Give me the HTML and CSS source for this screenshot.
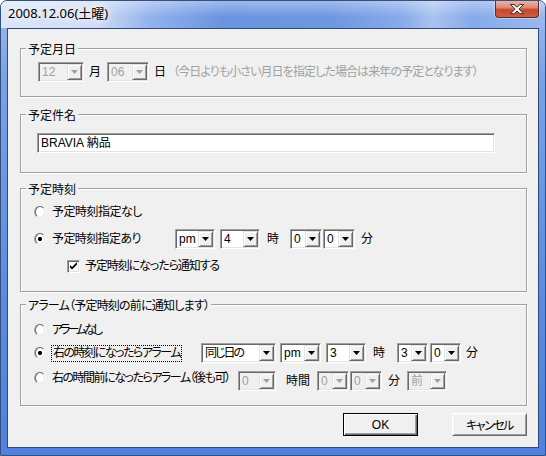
FILE: index.html
```html
<!DOCTYPE html>
<html lang="ja">
<head>
<meta charset="utf-8">
<title>2008.12.06(土曜)</title>
<link rel="stylesheet" href="styles.css">
</head>
<body>
<div class="window">
  <div class="titlebar">
    <div class="title">2008.12.06(土曜)</div>
    <div class="close">
      <svg width="42" height="17" viewBox="0 0 42 17"><path d="M14.5 3.5 h3.5 l3 2.6 l3 -2.6 h3.5 l-4.6 4.6 l4.6 4.6 h-3.5 l-3 -2.6 l-3 2.6 h-3.5 l4.6 -4.6 z" fill="#fff" stroke="#4a2a26" stroke-width="1" stroke-linejoin="round"/></svg>
    </div>
  </div>
  <div class="client">
    <fieldset class="group g1">
      <legend>予定月日</legend>
      <div class="row r-date">
        <span class="combo dis w46"><span class="val">12</span><span class="arrow"></span></span>
        <span class="lbl ml5">月</span>
        <span class="combo dis w42 ml6"><span class="val">06</span><span class="arrow"></span></span>
        <span class="lbl ml5">日</span>
        <span class="note ml7 ls09">（今日よりも小さい月日を指定した場合は来年の予定となります）</span>
      </div>
    </fieldset>

    <fieldset class="group g2">
      <legend>予定件名</legend>
      <div class="row r-name">
        <span class="textbox">BRAVIA 納品</span>
      </div>
    </fieldset>

    <fieldset class="group g3">
      <legend>予定時刻</legend>
      <div class="row r-radio">
        <span class="opt"><span class="radio"></span><span class="lbl ml6 ls05">予定時刻指定なし</span></span>
      </div>
      <div class="row r-radio mt7">
        <span class="opt w141"><span class="radio on"></span><span class="lbl ml6 ls06">予定時刻指定あり</span></span>
        <span class="combo w40"><span class="val">pm</span><span class="arrow"></span></span>
        <span class="combo w40 ml5"><span class="val">4</span><span class="arrow"></span></span>
        <span class="lbl ml7">時</span>
        <span class="combo w32 ml11"><span class="val">0</span><span class="arrow"></span></span>
        <span class="combo w32 ml1"><span class="val">0</span><span class="arrow"></span></span>
        <span class="lbl ml6">分</span>
      </div>
      <div class="row r-check mt7">
        <span class="check"><svg width="9" height="9" viewBox="0 0 9 9"><path d="M1 3 L3 5 L8 0 L8 2.6 L3 7.6 L1 5.6 Z" fill="#000"/></svg></span>
        <span class="lbl ml5 ls1">予定時刻になったら通知する</span>
      </div>
    </fieldset>

    <fieldset class="group g4">
      <legend class="ls08">アラーム（予定時刻の前に通知します）</legend>
      <div class="row r-radio">
        <span class="opt"><span class="radio"></span><span class="lbl ml6 ls3">アラームなし</span></span>
      </div>
      <div class="row r-radio mt3">
        <span class="opt w167"><span class="radio on"></span><span class="lbl focus ml5 ls15">右の時刻になったらアラーム</span></span>
        <span class="combo w75"><span class="val ls2">同じ日の</span><span class="arrow"></span></span>
        <span class="combo w41 ml4"><span class="val">pm</span><span class="arrow"></span></span>
        <span class="combo w40 ml5"><span class="val">3</span><span class="arrow"></span></span>
        <span class="lbl ml7">時</span>
        <span class="combo w31 ml12"><span class="val">3</span><span class="arrow"></span></span>
        <span class="combo w31 ml2"><span class="val">0</span><span class="arrow"></span></span>
        <span class="lbl ml5">分</span>
      </div>
      <div class="row r-radio r-low mt8">
        <span class="opt w204"><span class="radio"></span><span class="lbl ml6 ls15">右の時間前になったらアラーム（後も可）</span></span>
        <span class="combo dis w38"><span class="val">0</span><span class="arrow"></span></span>
        <span class="lbl ml10">時間</span>
        <span class="combo dis w32 ml7"><span class="val">0</span><span class="arrow"></span></span>
        <span class="combo dis w32 ml1"><span class="val">0</span><span class="arrow"></span></span>
        <span class="lbl ml6">分</span>
        <span class="combo dis w40 ml7"><span class="val">前</span><span class="arrow"></span></span>
      </div>
    </fieldset>

    <div class="buttons">
      <button class="btn default">OK</button>
      <button class="btn ls15">キャンセル</button>
    </div>
  </div>
</div>
</body>
</html>
```
FILE: styles.css
```css
* { box-sizing: border-box; }
html, body { margin: 0; padding: 0; }
body {
  width: 546px;
  height: 456px;
  overflow: hidden;
  background: #ffffff;
  font-family: "Liberation Sans", "Noto Sans CJK JP", sans-serif;
  font-size: 12px;
  font-feature-settings: "palt";
  color: #000;
}

.window {
  width: 546px;
  height: 456px;
  display: flex;
  flex-direction: column;
  border: 1px solid #34507c;
  border-radius: 7px 7px 0 0;
  background: linear-gradient(180deg, #9ebcee 0, #79a1e6 80px, #5b8be0 300px, #4f82de 100%);
  overflow: hidden;
}

.titlebar {
  height: 27px;
  flex: none;
  display: flex;
  align-items: flex-start;
  background:
    linear-gradient(180deg, rgba(255,255,255,0.35) 0, rgba(255,255,255,0) 16px),
    linear-gradient(90deg, #dce6f7 0, #cfddf5 95px, #92b2eb 150px, #6b94e0 220px, #6e97e1 330px, #88aaea 400px, #a9c3f0 432px, #87aaea 470px, #9ab8ee 545px);
}

.title {
  padding: 4px 0 0 7px;
  font-family: "Noto Sans", "Noto Sans CJK JP", sans-serif;
  font-size: 13px;
  line-height: 17px;
  color: #000;
  font-feature-settings: normal;
  text-shadow: 0 0 6px #fff, 0 0 10px #fff;
}

.close {
  margin-left: auto;
  margin-right: 6px;
  width: 44px;
  height: 17px;
  border: 1px solid #5c2b22;
  border-top: none;
  border-radius: 0 0 4px 4px;
  background: linear-gradient(180deg, #eab4a8 0, #dc8c78 40%, #c6462e 55%, #cf5e44 100%);
  box-shadow: 0 0 0 1px rgba(255,255,255,0.35);
  display: flex;
  align-items: center;
  justify-content: center;
}
.close svg { display: block; }

.client {
  flex: 1;
  margin: 0 6px 7px 6px;
  border: 1px solid #2f4a78;
  background: #f0f0f0;
  display: flex;
  flex-direction: column;
  align-items: flex-start;
}

.group {
  margin: 0 0 0 12px;
  padding: 0;
  width: 507px;
  min-inline-size: 0;
  border: 1px solid #a0a0a0;
  box-shadow: inset 1px 1px 0 #fff, 1px 1px 0 #fff;
}
.group legend {
  margin-left: 5px;
  padding: 0 2px;
  line-height: 15px;
  height: 15px;
  background: #f0f0f0;
  font-family: "Noto Sans CJK JP", sans-serif;
}

.g1 { margin-top: 12px; padding: 6px 0 14px 0; }
.g2 { margin-top: 10px; padding: 11px 0 19px 0; }
.g3 { margin-top: 8px; padding: 6px 0 15px 0; }
.g4 { margin-top: 5px; padding: 8px 0 14px 0; }

.row {
  display: flex;
  align-items: center;
  height: 20px;
}
.r-date { padding-left: 17px; }
.r-name { padding-left: 16px; }
.r-radio { padding-left: 13px; }
.r-check { padding-left: 46px; }
.r-low { align-items: flex-start; }

.mt3 { margin-top: 3px; }
.mt7 { margin-top: 7px; }
.mt8 { margin-top: 8px; }

.ml1 { margin-left: 1px; }
.ml2 { margin-left: 2px; }
.ml4 { margin-left: 4px; }
.ml5 { margin-left: 5px; }
.ml6 { margin-left: 6px; }
.ml7 { margin-left: 7px; }
.ml10 { margin-left: 10px; }
.ml11 { margin-left: 11px; }
.ml12 { margin-left: 12px; }

.w31 { width: 31px; }
.w32 { width: 32px; }
.w38 { width: 38px; }
.w40 { width: 40px; }
.w41 { width: 41px; }
.w42 { width: 42px; }
.w46 { width: 46px; }
.w75 { width: 75px; }
.w141 { width: 141px; }
.w167 { width: 167px; }
.w204 { width: 204px; }

/* tighter tracking to match the narrow proportional kana of the original UI font */
.ls05 { letter-spacing: -0.5px; }
.ls06 { letter-spacing: -0.6px; }
.ls08 { letter-spacing: -0.8px; }
.ls09 { letter-spacing: -0.9px; }
.ls1 { letter-spacing: -1.1px; }
.ls15 { letter-spacing: -1.5px; }
.ls2 { letter-spacing: -2px; }
.ls3 { letter-spacing: -3px; }

.lbl {
  line-height: 14px;
  white-space: nowrap;
  flex: none;
}
.note {
  line-height: 14px;
  white-space: nowrap;
  color: #a0a0a0;
}

.opt {
  display: flex;
  align-items: center;
  flex: none;
  height: 14px;
}
.r-low .combo, .r-low .lbl { align-self: center; }
.r-low .opt { align-self: flex-start; }
.r-low .opt .lbl { align-self: center; }

.focus {
  border: 1px dotted #000;
  padding: 0 1px 1px 1px;
  line-height: 14px;
}

/* radio */
.radio {
  width: 12px;
  height: 12px;
  flex: none;
  border-radius: 50%;
  border: 1px solid;
  border-color: #a0a0a0 #ffffff #ffffff #a0a0a0;
  display: flex;
  align-items: center;
  justify-content: center;
}
.radio::before {
  content: "";
  width: 10px;
  height: 10px;
  border-radius: 50%;
  border: 1px solid;
  border-color: #696969 #e3e3e3 #e3e3e3 #696969;
  background: #fff;
}
.radio.on::before {
  background: radial-gradient(circle, #000 0, #000 1.8px, #fff 2.4px);
}

/* checkbox */
.check {
  width: 13px;
  height: 13px;
  flex: none;
  border: 1px solid;
  border-color: #a0a0a0 #ffffff #ffffff #a0a0a0;
  box-shadow: inset 1px 1px 0 #696969, inset -1px -1px 0 #e3e3e3;
  background: #fff;
  padding: 1px 0 0 1px;
  display: flex;
}
.check svg { display: block; }

/* combo */
.combo {
  display: flex;
  flex: none;
  height: 20px;
  padding: 1px;
  border: 1px solid;
  border-color: #a0a0a0 #ffffff #ffffff #a0a0a0;
  box-shadow: inset 1px 1px 0 #696969, inset -1px -1px 0 #e3e3e3;
  background: #fff;
}
.combo .val {
  flex: 1;
  min-width: 0;
  padding-left: 2px;
  line-height: 16px;
  white-space: nowrap;
  overflow: hidden;
}
.combo .arrow {
  width: 15px;
  flex: none;
  border: 1px solid;
  border-color: #e3e3e3 #696969 #696969 #e3e3e3;
  box-shadow: inset 1px 1px 0 #fff, inset -1px -1px 0 #a0a0a0;
  background: #f0f0f0;
  display: flex;
  align-items: center;
  justify-content: center;
}
.combo .arrow::after {
  content: "";
  width: 7px;
  height: 4px;
  background: #000;
  clip-path: polygon(0 0, 100% 0, 50% 100%);
}
.combo.dis { background: #f0f0f0; color: #a0a0a0; }
.combo.dis .arrow::after { background: #a0a0a0; }

/* textbox */
.textbox {
  display: block;
  width: 458px;
  height: 20px;
  padding: 1px 3px;
  border: 1px solid;
  border-color: #a0a0a0 #ffffff #ffffff #a0a0a0;
  box-shadow: inset 1px 1px 0 #696969, inset -1px -1px 0 #e3e3e3;
  background: #fff;
  line-height: 16px;
}

/* buttons */
.buttons {
  display: flex;
  gap: 34px;
  margin: 7px 0 0 335px;
}
.btn {
  width: 75px;
  height: 23px;
  margin: 0;
  padding: 0;
  font: inherit;
  font-size: 12px;
  color: #000;
  background: #f0f0f0;
  border: 1px solid;
  border-color: #ffffff #696969 #696969 #ffffff;
  box-shadow: inset 1px 1px 0 #f7f7f7, inset -1px -1px 0 #a0a0a0;
}
.btn.default {
  border: 1px solid #000;
  box-shadow: inset 1px 1px 0 #fff, inset -1px -1px 0 #696969, inset -2px -2px 0 #a0a0a0;
}
```
